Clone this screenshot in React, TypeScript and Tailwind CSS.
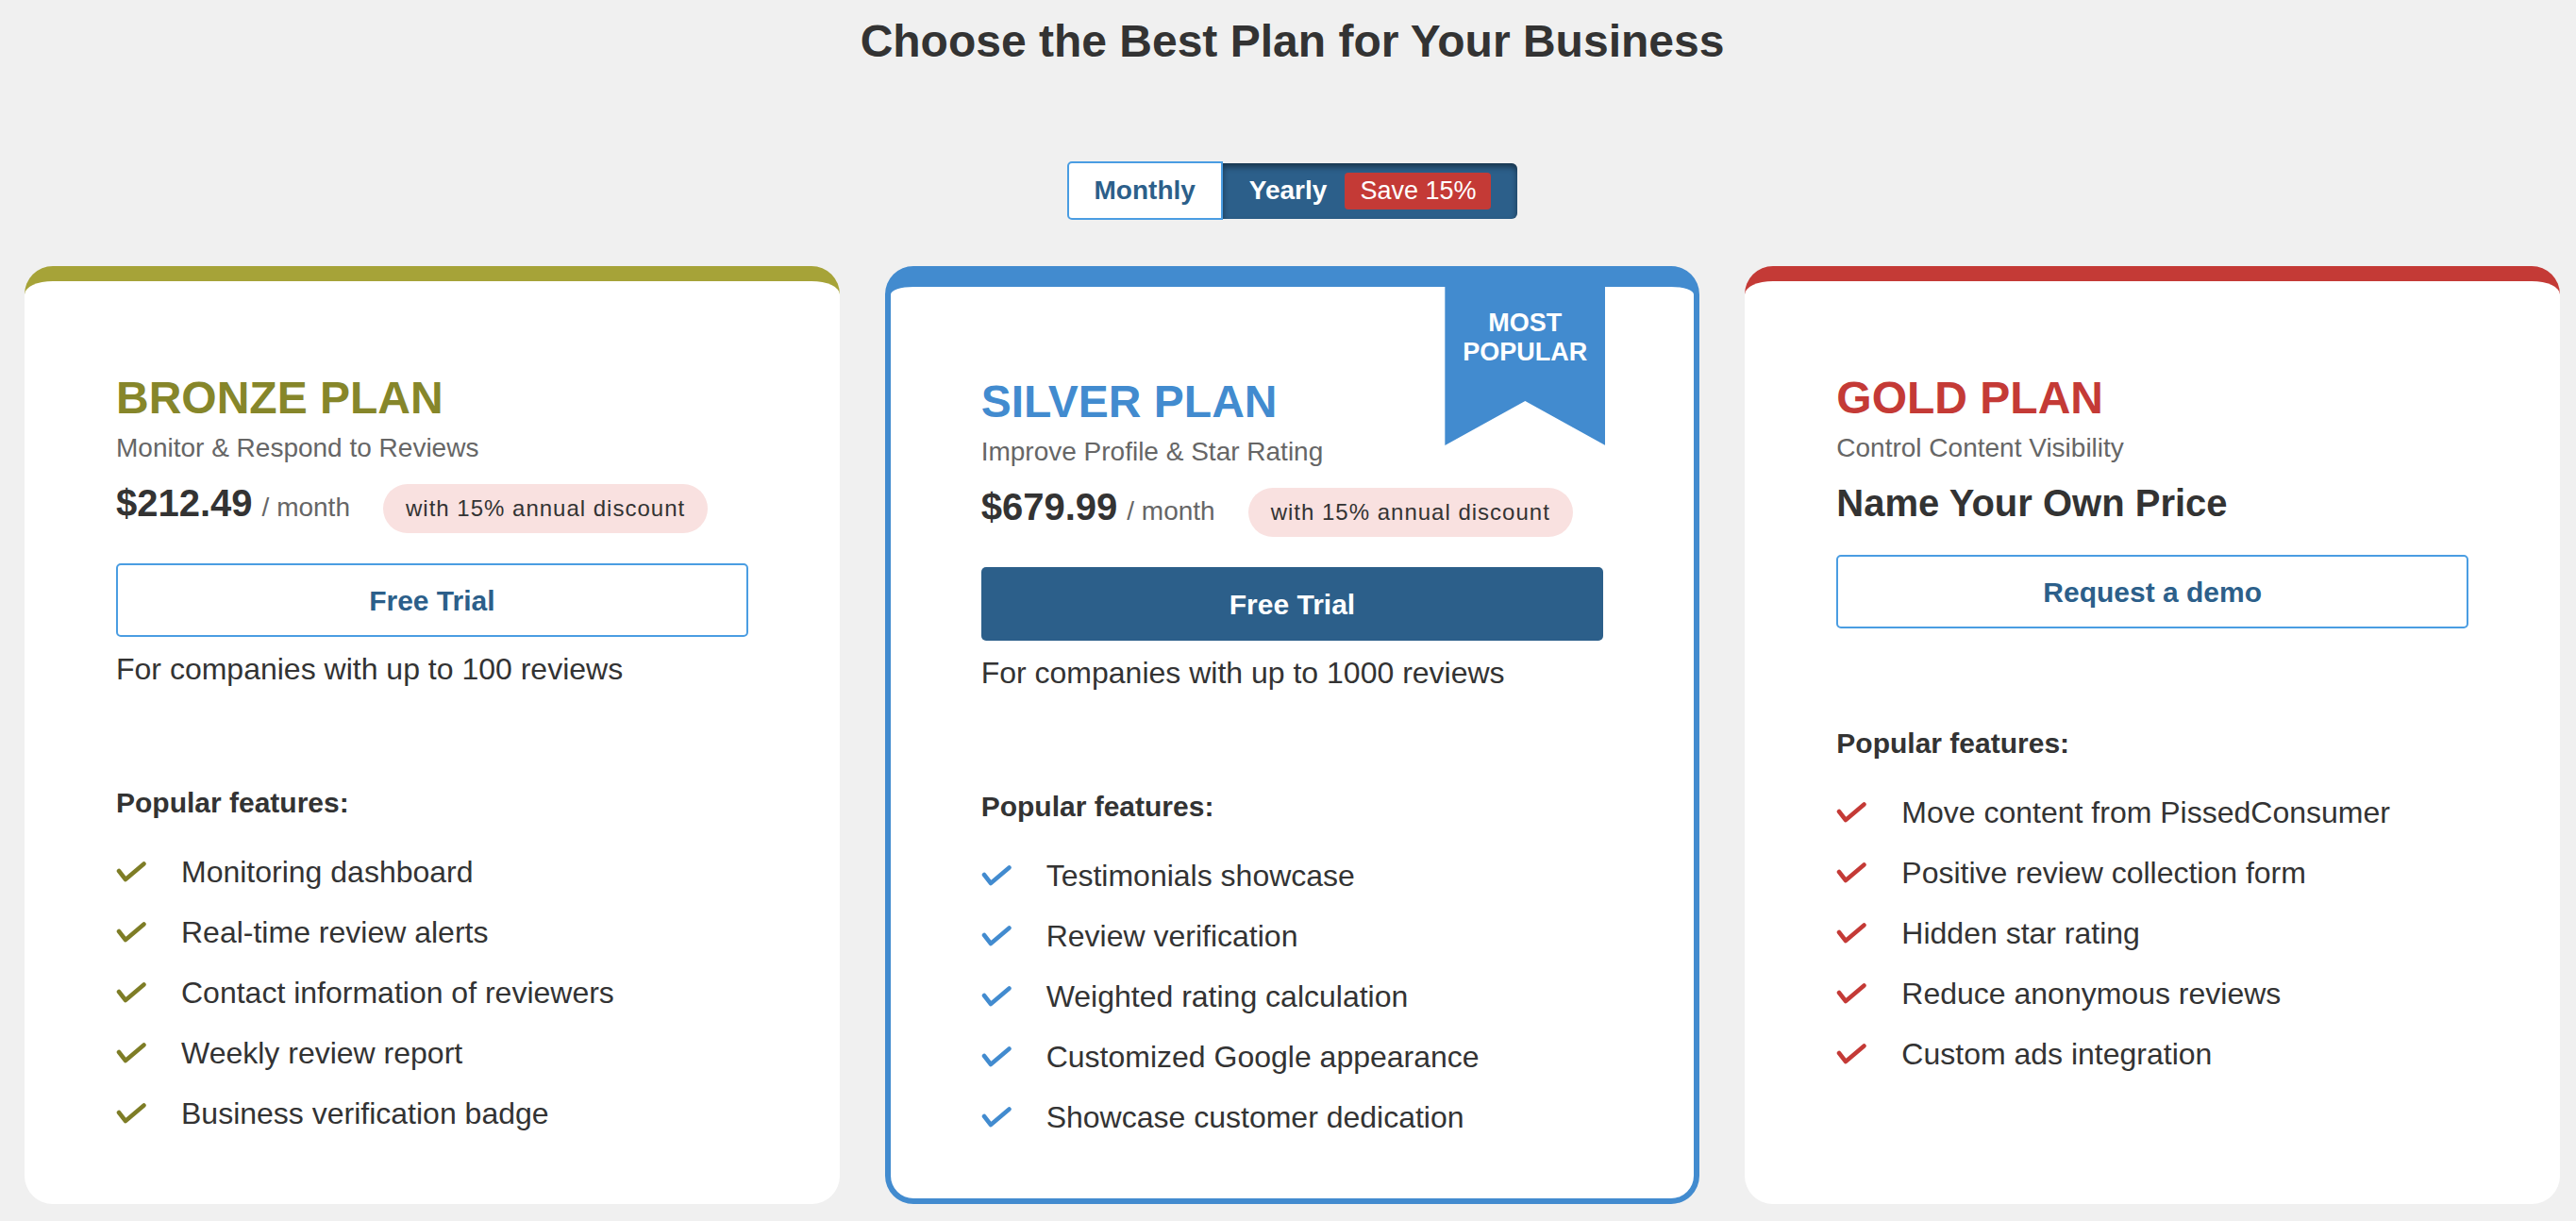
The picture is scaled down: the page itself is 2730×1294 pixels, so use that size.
import React from 'react';

type Plan = {
  name: string;
  subtitle: string;
  price?: string;
  cta: string;
  note?: string;
  features: string[];
  tone: 'bronze' | 'silver' | 'gold';
};

const plans: Plan[] = [
  {
    name: 'BRONZE PLAN',
    subtitle: 'Monitor & Respond to Reviews',
    price: '$212.49',
    cta: 'Free Trial',
    note: 'For companies with up to 100 reviews',
    tone: 'bronze',
    features: [
      'Monitoring dashboard',
      'Real-time review alerts',
      'Contact information of reviewers',
      'Weekly review report',
      'Business verification badge',
    ],
  },
  {
    name: 'SILVER PLAN',
    subtitle: 'Improve Profile & Star Rating',
    price: '$679.99',
    cta: 'Free Trial',
    note: 'For companies with up to 1000 reviews',
    tone: 'silver',
    features: [
      'Testimonials showcase',
      'Review verification',
      'Weighted rating calculation',
      'Customized Google appearance',
      'Showcase customer dedication',
    ],
  },
  {
    name: 'GOLD PLAN',
    subtitle: 'Control Content Visibility',
    cta: 'Request a demo',
    tone: 'gold',
    features: [
      'Move content from PissedConsumer',
      'Positive review collection form',
      'Hidden star rating',
      'Reduce anonymous reviews',
      'Custom ads integration',
    ],
  },
];

const toneStyles = {
  bronze: {
    card: 'border-t-[16px] border-t-[#a6a338] px-[97px] pt-[96px]',
    title: 'text-[#86862a]',
    check: '#7e7d26',
  },
  silver: {
    card: 'border-[6px] border-t-[22px] border-[#428bcf] px-[96px] pt-[94px]',
    title: 'text-[#428bcf]',
    check: '#428bcf',
  },
  gold: {
    card: 'border-t-[16px] border-t-[#c43a36] px-[97px] pt-[96px]',
    title: 'text-[#c43a36]',
    check: '#c43a36',
  },
};

function Check({ color }: { color: string }) {
  return (
    <svg width="32" height="22" viewBox="0 0 32 22" className="shrink-0">
      <polyline
        points="3,10 10,19 29.5,2.5"
        fill="none"
        stroke={color}
        strokeWidth="4.5"
        strokeLinecap="round"
        strokeLinejoin="round"
      />
    </svg>
  );
}

function PlanCard({ plan }: { plan: Plan }) {
  const t = toneStyles[plan.tone];
  const featured = plan.tone === 'silver';

  return (
    <div className={`relative bg-white rounded-[30px] pb-[66px] ${t.card}`}>
      {featured && (
        <div className="absolute top-0 right-[94px] w-[170px] h-[168px] bg-[#428bcf] pt-[23px] text-center text-white font-bold text-[27px] leading-[31px] [clip-path:polygon(0_0,100%_0,100%_100%,50%_72%,0_100%)]">
          MOST
          <br />
          POPULAR
        </div>
      )}

      <h2 className={`text-[48px] leading-[56px] font-bold ${t.title}`}>{plan.name}</h2>
      <p className="mt-[9px] text-[28px] leading-[32px] text-[#666]">{plan.subtitle}</p>

      {/* Price row */}
      {plan.price ? (
        <div className="mt-[19px] flex items-baseline">
          <span className="text-[40px] leading-[46px] font-bold text-[#333]">{plan.price}</span>
          <span className="ml-[10px] text-[28px] text-[#666]">/ month</span>
          <span className="ml-[35px] rounded-full bg-[#f9e1e0] px-[24px] py-[13px] text-[24px] leading-[26px] tracking-[1px] text-[#333]">
            with 15% annual discount
          </span>
        </div>
      ) : (
        <div className="mt-[19px] text-[40px] leading-[46px] font-bold text-[#333]">Name Your Own Price</div>
      )}

      {featured ? (
        <button className="mt-8 w-full h-[78px] rounded-[5px] bg-[#2c5f8a] text-white text-[30px] font-bold">
          {plan.cta}
        </button>
      ) : (
        <button className="mt-8 w-full h-[78px] rounded-[5px] border-2 border-[#4a9de2] bg-white text-[#2c5f8a] text-[30px] font-bold">
          {plan.cta}
        </button>
      )}

      {plan.note && <p className="mt-[14px] mb-[3px] text-[32px] leading-[40px] text-[#333]">{plan.note}</p>}

      <div className="mt-[104px]">
        <h3 className="text-[30px] leading-[36px] font-bold text-[#333]">Popular features:</h3>
        <ul className="mt-[35px] flex flex-col gap-6">
          {plan.features.map((f) => (
            <li key={f} className="flex items-center gap-[37px] text-[32px] leading-[40px] text-[#333]">
              <Check color={t.check} />
              <span>{f}</span>
            </li>
          ))}
        </ul>
      </div>
    </div>
  );
}

export default function App() {
  return (
    <div className="min-h-screen bg-[#f0f0f0] pt-[16px] pl-[26px] pr-[17px] pb-[17px] font-['Liberation_Sans',Arial,sans-serif]">
      <h1 className="text-center text-[48px] leading-[55px] font-bold text-[#333]">
        Choose the Best Plan for Your Business
      </h1>

      {/* Billing toggle */}
      <div className="mt-[100px] flex justify-center items-center">
        <button className="h-[62px] px-[27px] rounded-l-[5px] border-2 border-[#4a9de2] bg-white text-[28px] font-bold text-[#2c5f8a]">
          Monthly
        </button>
        <div className="h-[59px] flex items-center gap-[19px] pl-[28px] pr-[28px] rounded-r-[6px] bg-[#2c5f8a] shadow-[inset_0_4px_6px_rgba(0,0,0,0.45)]">
          <span className="text-[28px] font-bold text-white">Yearly</span>
          <span className="h-[39px] flex items-center px-[16px] rounded-[4px] bg-[#c43a36] text-[27px] text-white">
            Save 15%
          </span>
        </div>
      </div>

      <div className="mt-[49px] grid grid-cols-3 gap-[48px]">
        {plans.map((p) => (
          <PlanCard key={p.name} plan={p} />
        ))}
      </div>
    </div>
  );
}
